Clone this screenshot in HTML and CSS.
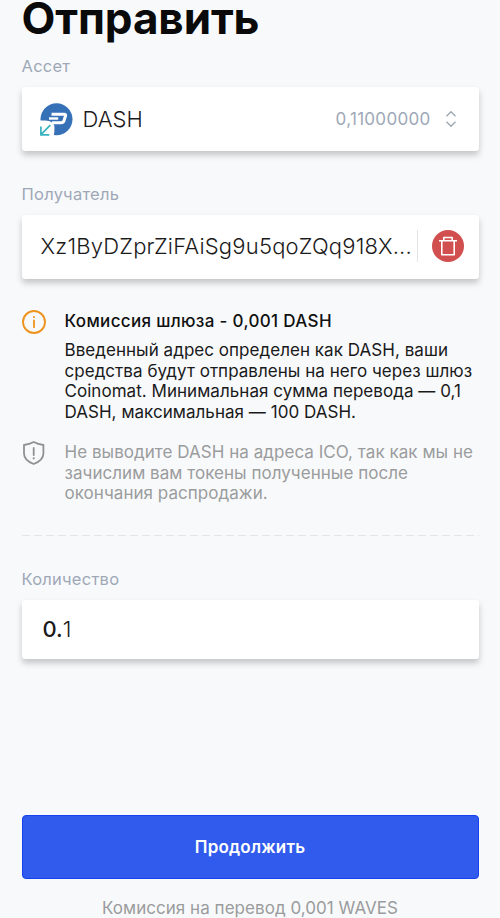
FILE: index.html
```html
<!DOCTYPE html>
<html lang="ru">
<head>
<meta charset="utf-8">
<meta name="viewport" content="width=device-width, initial-scale=1">
<title>Отправить</title>
<link rel="stylesheet" href="styles.css">
</head>
<body>
<main class="page">
  <h1 class="title"><span>Отправить</span></h1>

  <div class="label label-asset"><span>Ассет</span></div>
  <div class="card asset">
    <svg class="coin" viewBox="0 0 33 33" width="33" height="33">
      <circle cx="16.5" cy="16.2" r="16" fill="#3671b8"/>
      <path d="M-1 17.5H5Q14.5 17.5 14.5 25Q14.5 30 13.5 34H-1Z" fill="#fff"/>
      <path d="M11.5 11.2H24.2Q26 11.2 25.5 12.9L24 17.6Q23.3 19.7 21 19.7H12" fill="none" stroke="#fff" stroke-width="3.1"/>
      <path d="M9 15.5H18.2" fill="none" stroke="#fff" stroke-width="2.4"/>
      <path d="M.9 23.5V31.8H9.3M1.2 31.4L10.3 22.2" fill="none" stroke="#38b3bf" stroke-width="1.7"/>
    </svg>
    <span class="asset-name"><span>DASH</span></span>
    <span class="balance"><span>0,11000000</span></span>
    <svg class="sort" viewBox="0 0 12 18" width="12" height="18" fill="none" stroke="#9ba6b2" stroke-width="1.3">
      <path d="M1.5 6.2L6 1.7L10.5 6.2M1.5 11.8L6 16.3L10.5 11.8"/>
    </svg>
  </div>

  <div class="label label-to"><span>Получатель</span></div>
  <div class="card recipient">
    <span class="address"><span>Xz1ByDZprZiFAiSg9u5qoZQq918X...</span></span>
    <span class="divider"></span>
    <svg class="trash" viewBox="0 0 32 32" width="32" height="32" fill="none" stroke="#fff" stroke-width="1.6">
      <circle cx="16" cy="16" r="16" fill="#d1504f" stroke="none"/>
      <path d="M7 10.8H25M11.8 10.5V7.5H20.2V10.5M9.8 11V24.7H22.2V11" stroke-linejoin="round"/>
    </svg>
  </div>

  <section class="notice notice-fee">
    <svg viewBox="0 0 24 24" width="24" height="24" fill="none" stroke="#ec941f">
      <circle cx="12" cy="12" r="11" stroke-width="1.9"/>
      <path d="M12 10.5V17.2" stroke-width="1.8" stroke-linecap="round"/>
      <circle cx="12" cy="7" r="1.1" fill="#ec941f" stroke="none"/>
    </svg>
    <div>
      <h2><span>Комиссия шлюза - 0,001 DASH</span></h2>
      <p><span>Введенный адрес определен как DASH, ваши</span><br><span>средства будут отправлены на него через шлюз</span><br><span>Coinomat. Минимальная сумма перевода — 0,1</span><br><span>DASH, максимальная — 100 DASH.</span></p>
    </div>
  </section>
  <section class="notice notice-ico">
    <svg viewBox="0 0 24 24" width="24" height="24" fill="none" stroke="#8f9193" stroke-width="1.8">
      <path d="M11.7 1Q7.4 3.3 2 4V12.5Q2 19.3 11.7 23Q21.4 19.3 21.4 12.5V4Q16 3.3 11.7 1Z" stroke-linejoin="round"/>
      <path d="M11.7 7V14" stroke-linecap="round"/>
      <circle cx="11.7" cy="17.3" r="1.1" fill="#8f9193" stroke="none"/>
    </svg>
    <p><span>Не выводите DASH на адреса ICO, так как мы не</span><br><span>зачислим вам токены полученные после</span><br><span>окончания распродажи.</span></p>
  </section>

  <div class="rule"></div>

  <div class="label label-amount"><span>Количество</span></div>
  <div class="card amount"><span><b>0.</b>1</span></div>

  <button class="continue" type="button"><span>Продолжить</span></button>
  <footer class="fee"><span>Комиссия на перевод 0,001 WAVES</span></footer>
</main>
</body>
</html>
```
FILE: styles.css
```css
* { box-sizing: border-box; }
body {
  margin: 0;
  background: #f8f9fb;
  color: #1a1a1a;
  font-family: Inter, "Liberation Sans", sans-serif;
}
.page {
  display: flex;
  flex-direction: column;
  height: 918px;
  padding: 0 21.5px;
}
h1, h2, p { margin: 0; }
.title {
  height: 44px;
  flex: none;
  font-size: 44px;
  line-height: 36px;
  letter-spacing: -0.1px;
  font-weight: 700;
  color: #0a0a0a;
  white-space: nowrap;
}
.label {
  height: 22px;
  flex: none;
  font-size: 16.5px;
  line-height: 22px;
  letter-spacing: 0.25px;
  font-weight: 400;
  color: #9ea8b7;
}
.label-asset { margin-top: 11px; }
.label-to { margin-top: 32px; }
.label-amount { margin-top: 32px; }
.card {
  display: flex;
  align-items: center;
  height: 64px;
  margin-top: 10px;
  background: #fff;
  border-radius: 3px;
  box-shadow: 0 4px 6px rgba(0, 0, 0, 0.21);
  white-space: nowrap;
  flex: none;
}
.asset { padding: 0 22px 0 18px; }
.asset-name {
  margin-left: 10px;
  font-size: 22px;
  font-weight: 300;
}
.balance {
  margin-left: auto;
  font-size: 17px;
  font-weight: 400;
  letter-spacing: 0.3px;
  color: #9ea8b7;
}
.sort { margin-left: 14px; }
.recipient { padding: 0 15px 2px 19px; }
.address {
  width: 376px;
  font-size: 22px;
  font-weight: 300;
  letter-spacing: 0.2px;
}
.divider {
  width: 1px;
  height: 32px;
  background: #e2e5e8;
}
.trash { margin-left: auto; }
.notice {
  display: flex;
  gap: 19px;
  font-size: 17px;
  font-weight: 400;
  letter-spacing: 0.04px;
  line-height: 20.7px;
  white-space: nowrap;
}
.notice svg { flex: none; }
.notice-fee { margin-top: 31px; }
.notice h2 {
  font-size: 17px;
  line-height: 22px;
  font-weight: 500;
  letter-spacing: 0.33px;
  color: #111;
}
.notice-fee p { margin-top: 8px; }
.notice-ico {
  margin-top: 19px;
  color: #9a9c9d;
}
.notice-ico svg { margin-top: -1px; }
.rule {
  height: 1px;
  margin-top: 31px;
  flex: none;
  background: repeating-linear-gradient(90deg, #e3e5e8 0 8px, transparent 8px 12px);
}
.amount {
  height: 59px;
  padding-left: 21px;
  font-size: 22px;
  font-weight: 300;
}
.amount b { font-weight: 500; }
.continue {
  height: 64px;
  margin-top: auto;
  padding: 0;
  flex: none;
  border: 1px solid #1641ee;
  border-radius: 4px;
  background: #315bed;
  color: #fff;
  font: 600 17px/22px Inter, "Liberation Sans", sans-serif;
  letter-spacing: 0.2px;
}
.fee {
  height: 39px;
  padding-top: 18px;
  flex: none;
  font-size: 17px;
  font-weight: 400;
  line-height: 22px;
  letter-spacing: 0.04px;
  text-align: center;
  color: #9a9c9d;
}
```
